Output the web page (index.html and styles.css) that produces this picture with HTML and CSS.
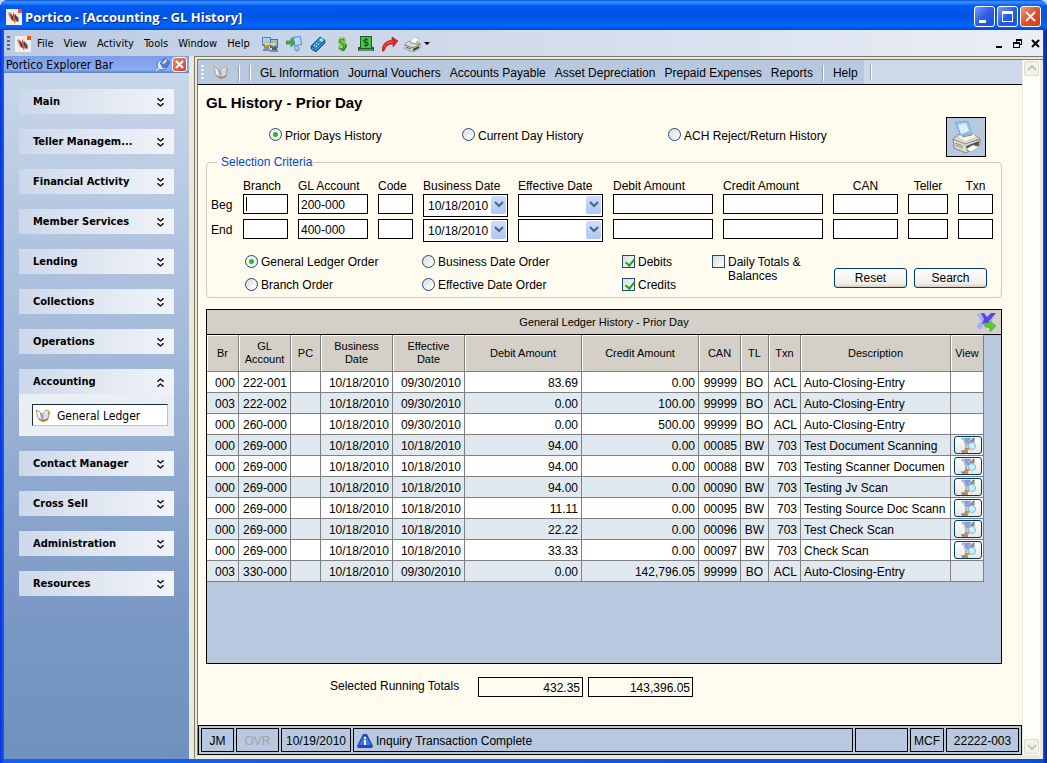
FILE: index.html
```html
<!DOCTYPE html>
<html lang="en">
<head>
  <meta charset="UTF-8">
  <meta name="viewport" content="width=device-width, initial-scale=1.0">
  <title>Portico - [Accounting - GL History]</title>
  <link rel="stylesheet" href="styles.css">
</head>
<body>
  <!-- Shared icons -->
  <svg class="defs" width="0" height="0">
    <symbol id="logo" viewBox="0 0 16 16">
      <rect width="16" height="16" fill="#f2eeea"/>
      <path d="M2 4l2-1 3 4v4l-1 1-2-3z" fill="#c98b6a"/>
      <path d="M4 5l2 1 2 4v2l-2-1z" fill="#3b3f58"/>
      <path d="M7 3l2 3 1 4-1 5-2-5z" fill="#e5502a"/>
      <path d="M9 5l3 4 1 3-2 1-2-4z" fill="#3b3f58"/>
      <path d="M11 6l2 3v4l-1-2z" fill="#a98a98"/>
      <rect x="12" width="4" height="4" fill="#f4511e"/>
    </symbol>
    <symbol id="book" viewBox="0 0 16 13">
      <path d="M1 2l3 9 4 2 5-2 2-8-1-1-4 1-2 3-3-3-3-2z" fill="#a8682c"/>
      <path d="M1 1l4 2 3 8-3-1-2-1z" fill="#fff" stroke="#d8954a"/>
      <path d="M8 11V4l3-3 3 1-1 7-2 1z" fill="#eef6fd" stroke="#d8954a"/>
      <path d="M5 3l3 3v5L6 9z" fill="#6aa6dc"/>
      <path d="M10 4v5M12 3v5" stroke="#a9cdee"/>
    </symbol>
    <symbol id="chev-down" viewBox="0 0 7 9">
      <path d="M1 0v1l2.500 2 2.500-2V0M1 5v1l2.500 2 2.500-2V5" fill="none" stroke="#000" stroke-width="1.300"/>
    </symbol>
    <symbol id="chev-up" viewBox="0 0 7 9">
      <path d="M1 4V3l2.500-2L6 3v1M1 9V8l2.500-2L6 8v1" fill="none" stroke="#000" stroke-width="1.300"/>
    </symbol>
    <symbol id="view" viewBox="0 0 18 16">
      <path d="M3 1h9l-1 2 1 2-1 2 1 2H7L6 7 5 5l1-2H3z" fill="#b9c8ec" stroke="#7c8fc0" stroke-width=".500"/>
      <path d="M6 2h5M6 4h4M7 6h4" stroke="#5f77b4"/>
      <path d="M12 5V3h2V1h1v4z" fill="#c8c8c4" stroke="#555" stroke-width=".800"/>
      <path d="M7 9v3M2 14h4v-2h4" fill="none" stroke="#7b7b78"/>
      <path d="M3 15h6" stroke="#444"/>
      <path d="M10 11l-4 4" stroke="#e8803a" stroke-width="2"/>
      <circle cx="13" cy="9" r="3.500" fill="#c4f2fb" stroke="#88b4e4"/>
      <path d="M11 8l2-1" stroke="#fff"/>
    </symbol>
  </svg>

  <div class="window">
    <header class="titlebar">
      <svg width="16" height="16"><use href="#logo"/></svg>
      <h1>Portico - [Accounting - GL History]</h1>
      <div class="win-buttons">
        <button type="button" aria-label="Minimize"><svg width="19" height="19"><path d="M4 13h7v3H4z" fill="#fff"/></svg></button>
        <button type="button" aria-label="Maximize"><svg width="19" height="19"><path d="M4 4h11v11H4zM5 7v7h9V7z" fill="#fff" fill-rule="evenodd"/></svg></button>
        <button type="button" class="close" aria-label="Close"><svg width="19" height="19"><path d="M5 5l9 9M14 5l-9 9" stroke="#fff" stroke-width="2"/></svg></button>
      </div>
    </header>

    <nav class="menubar">
      <span class="grip"></span>
      <svg class="child-logo" width="16" height="16"><use href="#logo"/></svg>
      <div class="menus">
        <button type="button">File</button>
        <button type="button">View</button>
        <button type="button">Activity</button>
        <button type="button">Tools</button>
        <button type="button">Window</button>
        <button type="button">Help</button>
      </div>
      <div class="tools">
        <button type="button" aria-label="Transfer"><svg width="16" height="16">
          <path d="M0 1h9v9H0z" fill="#4f86d8"/><path d="M1 2h7v6H1z" fill="#a6d2f8"/>
          <path d="M8 3h8v9H8z" fill="#3f6fc4"/><path d="M9 4h6v6H9z" fill="#8fc0f2"/>
          <path d="M2 10h5v3H2z" fill="#7d8db4"/><path d="M10 12h5v2h-5z" fill="#4c5a80"/>
          <path d="M1 14h7M8 15h8" stroke="#3c4660"/>
          <path d="M2 8l3-3v2h6V5l3 3-3 3V9H5v2z" fill="#fce83a" stroke="#b8901a" stroke-width=".500"/></svg></button>
        <button type="button" aria-label="Sign on"><svg width="16" height="16">
          <path d="M6 1l9-1 1 9-8 1z" fill="#5a8ed6"/><path d="M8 2l6-1 1 7-6 1z" fill="#b2dcfa"/>
          <path d="M8 10h5l1 4-3 2-3-2z" fill="#86a6d0"/><path d="M9 12h3" stroke="#dce8f6"/>
          <path d="M0 5h5V2l4 5-4 4V8H0z" fill="#3cae48" stroke="#1c7a2c" stroke-width=".500"/></svg></button>
        <button type="button" aria-label="Calculator"><svg width="16" height="16">
          <path d="M1 10l9-9 5 3v3l-9 9-5-3z" fill="#0e5f9c" stroke="#0b3e6b" stroke-width=".500"/>
          <path d="M2 10l8-8 4 2-8 9z" fill="#2f97d8"/><path d="M9 4l2-2 3 2-2 2z" fill="#b2e6fa"/>
          <path d="M6 7l1 1M8 8l1 1M4 9l1 1M6 10l1 1" stroke="#cdeefb"/>
          <path d="M2 12l4 2 8-8" fill="none" stroke="#49b0e6"/></svg></button>
        <button type="button" aria-label="Money"><svg width="16" height="16">
          <path d="M6 1h4l2 3-1 2 2 2v3l-3 4-5-1-1-3 2-2-2-3 1-4z" fill="#76c44a"/>
          <path d="M10 4L8 3 6 4v2l4 3v2l-2 2-3-1" fill="none" stroke="#2f8430"/>
          <path d="M11 8l2 2-3 5H7l4-4z" fill="#2f7a2c"/>
          <path d="M6 2h3M6 11h2" stroke="#d4f0a4"/></svg></button>
        <button type="button" aria-label="Cash"><svg width="16" height="16">
          <path d="M2 0h12v11h2v4H0v-4h2z" fill="#1d5b28"/><path d="M3 1h10v11H3z" fill="#4cc04c"/>
          <path d="M10 4L8 3 6 4v2l4 1v2l-2 1-2-1M8 2v9" fill="none" stroke="#0a4a18"/>
          <path d="M1 14h14" stroke="#a8c4a8"/></svg></button>
        <button type="button" aria-label="Forward"><svg width="16" height="16">
          <path d="M0 15C0 8 4 5 10 4V1l6 4-5 6V8c-5 0-7 2-9 7z" fill="#df2020" stroke="#8e1111" stroke-width=".500"/>
          <path d="M2 11c2-4 5-5 9-5" fill="none" stroke="#ff7068"/></svg></button>
        <button type="button" class="print-menu" aria-label="Print"><svg width="26" height="16">
          <path d="M6 6l4-5 5 2-3 5z" fill="#fff" stroke="#999" stroke-width=".500"/>
          <path d="M0 9l5-4 2 2 6 1 3-1v5l-7 4-9-4z" fill="#dcdad4" stroke="#555" stroke-width=".500"/>
          <path d="M1 9l8 3 7-4" fill="none" stroke="#77756f"/><path d="M9 13l6-3v2l-6 3z" fill="#333"/>
          <path d="M2 11l5 2" stroke="#666"/>
          <circle cx="13" cy="6" r="1" fill="#e3bb20"/>
          <path d="M20 6h6l-3 3z" fill="#000"/></svg></button>
      </div>
      <div class="child-buttons">
        <button type="button" aria-label="Minimize child"><svg width="10" height="10"><path d="M1 8h6" stroke="#000" stroke-width="2"/></svg></button>
        <button type="button" aria-label="Restore child"><svg width="10" height="10"><path d="M3 0h6v6H7V5h1V2H4v1H3zM0 3h7v6H0zm1 2v3h5V5z" fill="#000" fill-rule="evenodd"/></svg></button>
        <button type="button" aria-label="Close child"><svg width="10" height="10"><path d="M1 1l7 7M8 1L1 8" stroke="#000" stroke-width="2"/></svg></button>
      </div>
    </nav>

    <div class="workspace">
      <aside class="explorer">
        <div class="explorer-head">
          <h2>Portico Explorer Bar</h2>
          <button type="button" aria-label="Auto hide"><svg width="15" height="15">
            <circle cx="7" cy="8" r="5" fill="#dfe9fa" stroke="#4d72b8"/>
            <path d="M5 6l5-5 5 4-3 5-4 1z" fill="#4f7fd0" stroke="#2b4f9b" stroke-width=".500"/>
            <path d="M7 6l4-4 1 2-3 3z" fill="#d5e5ff"/><path d="M1 14l4-4" stroke="#eef4ff"/></svg></button>
          <button type="button" class="explorer-close" aria-label="Close explorer"><svg width="13" height="13"><path d="M3 3l7 7M10 3l-7 7" stroke="#fff" stroke-width="2"/></svg></button>
        </div>
        <ul class="groups">
          <li><button type="button">Main<svg width="7" height="9"><use href="#chev-down"/></svg></button></li>
          <li><button type="button">Teller Managem...<svg width="7" height="9"><use href="#chev-down"/></svg></button></li>
          <li><button type="button">Financial Activity<svg width="7" height="9"><use href="#chev-down"/></svg></button></li>
          <li><button type="button">Member Services<svg width="7" height="9"><use href="#chev-down"/></svg></button></li>
          <li><button type="button">Lending<svg width="7" height="9"><use href="#chev-down"/></svg></button></li>
          <li><button type="button">Collections<svg width="7" height="9"><use href="#chev-down"/></svg></button></li>
          <li><button type="button">Operations<svg width="7" height="9"><use href="#chev-down"/></svg></button></li>
          <li class="open">
            <button type="button">Accounting<svg width="7" height="9"><use href="#chev-up"/></svg></button>
            <div class="group-body">
              <a href="#"><svg width="16" height="13"><use href="#book"/></svg>General Ledger</a>
            </div>
          </li>
          <li><button type="button">Contact Manager<svg width="7" height="9"><use href="#chev-down"/></svg></button></li>
          <li><button type="button">Cross Sell<svg width="7" height="9"><use href="#chev-down"/></svg></button></li>
          <li><button type="button">Administration<svg width="7" height="9"><use href="#chev-down"/></svg></button></li>
          <li><button type="button">Resources<svg width="7" height="9"><use href="#chev-down"/></svg></button></li>
        </ul>
      </aside>

      <div class="pane">
        <div class="document">
          <nav class="gl-toolbar">
            <div class="gl-menus">
              <span class="grip light"></span>
              <svg class="gl-book" width="16" height="13"><use href="#book"/></svg>
              <span class="sep"></span>
              <span class="sep"></span>
              <button type="button">GL Information</button>
              <button type="button">Journal Vouchers</button>
              <button type="button">Accounts Payable</button>
              <button type="button">Asset Depreciation</button>
              <button type="button">Prepaid Expenses</button>
              <button type="button">Reports</button>
              <span class="sep"></span>
              <button type="button">Help</button>
            </div>
            <span class="sep"></span>
          </nav>

          <main class="history">
            <h2>GL History - Prior Day</h2>
            <div class="modes">
              <label><input type="radio" name="mode" checked>Prior Days History</label>
              <label><input type="radio" name="mode">Current Day History</label>
              <label><input type="radio" name="mode">ACH Reject/Return History</label>
              <button type="button" class="print" aria-label="Print report"><svg width="32" height="34">
                <path d="M5 2l13-1 4 13-11 2z" fill="#8fc4f6" stroke="#5b94cf" stroke-width=".500"/>
                <path d="M8 5l8-2 3 8-8 3z" fill="#dceffd"/>
                <path d="M3 19l6-5 3 2 10-2 6 3 2 2v6l-14 8-12-5z" fill="#dddbd2" stroke="#77756c" stroke-width=".800"/>
                <path d="M3 19l12 5 15-5" fill="none" stroke="#8c8a80"/>
                <path d="M7 17l4-2 2 1 10-2 4 3-12 5z" fill="#f6f5f0" stroke="#a9a79c" stroke-width=".500"/>
                <path d="M12 17l10-2" stroke="#8c8a80"/>
                <path d="M16 26l13-5v4l-12 6z" fill="#55544f"/>
                <path d="M16 29l7-4 6 2-8 5z" fill="#fff" stroke="#8a8a85" stroke-width=".500"/>
                <path d="M5 23l8 3M5 25l8 3" stroke="#8f8d85"/>
                <path d="M26 20l2-1" stroke="#58b848"/></svg></button>
            </div>

            <fieldset>
              <legend>Selection Criteria</legend>
              <div class="criteria">
                <span></span>
                <span>Branch</span>
                <span>GL Account</span>
                <span>Code</span>
                <span>Business Date</span>
                <span>Effective Date</span>
                <span>Debit Amount</span>
                <span>Credit Amount</span>
                <span class="mid">CAN</span>
                <span class="mid">Teller</span>
                <span class="mid">Txn</span>

                <span class="row-name">Beg</span>
                <span class="caret"><input type="text" aria-label="Beg Branch"></span>
                <input type="text" value="200-000" aria-label="Beg GL Account">
                <input type="text" aria-label="Beg Code">
                <span class="combo"><select aria-label="Beg Business Date"><option>10/18/2010</option></select><svg width="15" height="18"><path d="M4 6l4 4 4-4" fill="none" stroke="#4d6185" stroke-width="2"/></svg></span>
                <span class="combo"><select aria-label="Beg Effective Date"><option></option></select><svg width="15" height="18"><path d="M4 6l4 4 4-4" fill="none" stroke="#4d6185" stroke-width="2"/></svg></span>
                <input type="text" aria-label="Beg Debit Amount">
                <input type="text" aria-label="Beg Credit Amount">
                <input type="text" aria-label="Beg CAN">
                <input type="text" aria-label="Beg Teller">
                <input type="text" aria-label="Beg Txn">

                <span class="row-name">End</span>
                <input type="text" aria-label="End Branch">
                <input type="text" value="400-000" aria-label="End GL Account">
                <input type="text" aria-label="End Code">
                <span class="combo"><select aria-label="End Business Date"><option>10/18/2010</option></select><svg width="15" height="18"><path d="M4 6l4 4 4-4" fill="none" stroke="#4d6185" stroke-width="2"/></svg></span>
                <span class="combo"><select aria-label="End Effective Date"><option></option></select><svg width="15" height="18"><path d="M4 6l4 4 4-4" fill="none" stroke="#4d6185" stroke-width="2"/></svg></span>
                <input type="text" aria-label="End Debit Amount">
                <input type="text" aria-label="End Credit Amount">
                <input type="text" aria-label="End CAN">
                <input type="text" aria-label="End Teller">
                <input type="text" aria-label="End Txn">
              </div>
              <div class="options">
                <div class="option-col">
                  <label><input type="radio" name="order" checked>General Ledger Order</label>
                  <label><input type="radio" name="order">Branch Order</label>
                </div>
                <div class="option-col">
                  <label><input type="radio" name="order">Business Date Order</label>
                  <label><input type="radio" name="order">Effective Date Order</label>
                </div>
                <div class="option-col">
                  <label><input type="checkbox" checked>Debits</label>
                  <label><input type="checkbox" checked>Credits</label>
                </div>
                <div class="option-col">
                  <label><input type="checkbox">Daily Totals &amp;<br>Balances</label>
                </div>
                <div class="actions">
                  <button type="button">Reset</button>
                  <button type="button">Search</button>
                </div>
              </div>
            </fieldset>

            <section class="ledger">
              <div class="ledger-head">
                <h3>General Ledger History - Prior Day</h3>
                <button type="button" aria-label="Export"><svg width="20" height="20">
                  <path d="M1 2q3-2 6 1l2 4-1 5-3 5H2l-1-3 4-5z" fill="#a9acf8"/>
                  <path d="M13 6h4l-1 4h-4z" fill="#a9acf8"/>
                  <path d="M5 1h3l3 4 4-4h5l-6 7-2 3-6 1 2-5z" fill="#5048ea"/>
                  <path d="M8 11h5V8l7 6-6 6v-4l-5-1z" fill="#5ac832" stroke="#48a828" stroke-width=".500"/></svg></button>
              </div>
              <table>
                <colgroup>
                  <col class="c-br"><col class="c-gl"><col class="c-pc"><col class="c-date"><col class="c-date">
                  <col class="c-amt"><col class="c-amt"><col class="c-can"><col class="c-tl"><col class="c-txn">
                  <col class="c-desc"><col class="c-view">
                </colgroup>
                <thead>
                  <tr><th>Br</th><th>GL<br>Account</th><th>PC</th><th>Business<br>Date</th><th>Effective<br>Date</th><th>Debit Amount</th><th>Credit Amount</th><th>CAN</th><th>TL</th><th>Txn</th><th>Description</th><th>View</th></tr>
                </thead>
                <tbody>
                  <tr><td>000</td><td>222-001</td><td></td><td>10/18/2010</td><td>09/30/2010</td><td>83.69</td><td>0.00</td><td>99999</td><td>BO</td><td>ACL</td><td>Auto-Closing-Entry</td><td></td></tr>
                  <tr><td>003</td><td>222-002</td><td></td><td>10/18/2010</td><td>09/30/2010</td><td>0.00</td><td>100.00</td><td>99999</td><td>BO</td><td>ACL</td><td>Auto-Closing-Entry</td><td></td></tr>
                  <tr><td>000</td><td>260-000</td><td></td><td>10/18/2010</td><td>09/30/2010</td><td>0.00</td><td>500.00</td><td>99999</td><td>BO</td><td>ACL</td><td>Auto-Closing-Entry</td><td></td></tr>
                  <tr><td>000</td><td>269-000</td><td></td><td>10/18/2010</td><td>10/18/2010</td><td>94.00</td><td>0.00</td><td>00085</td><td>BW</td><td>703</td><td>Test Document Scanning</td><td><button type="button" aria-label="View"><svg width="18" height="16"><use href="#view"/></svg></button></td></tr>
                  <tr><td>000</td><td>269-000</td><td></td><td>10/18/2010</td><td>10/18/2010</td><td>94.00</td><td>0.00</td><td>00088</td><td>BW</td><td>703</td><td>Testing Scanner Documen</td><td><button type="button" aria-label="View"><svg width="18" height="16"><use href="#view"/></svg></button></td></tr>
                  <tr><td>000</td><td>269-000</td><td></td><td>10/18/2010</td><td>10/18/2010</td><td>94.00</td><td>0.00</td><td>00090</td><td>BW</td><td>703</td><td>Testing Jv Scan</td><td><button type="button" aria-label="View"><svg width="18" height="16"><use href="#view"/></svg></button></td></tr>
                  <tr><td>000</td><td>269-000</td><td></td><td>10/18/2010</td><td>10/18/2010</td><td>11.11</td><td>0.00</td><td>00095</td><td>BW</td><td>703</td><td>Testing Source Doc Scann</td><td><button type="button" aria-label="View"><svg width="18" height="16"><use href="#view"/></svg></button></td></tr>
                  <tr><td>000</td><td>269-000</td><td></td><td>10/18/2010</td><td>10/18/2010</td><td>22.22</td><td>0.00</td><td>00096</td><td>BW</td><td>703</td><td>Test Check Scan</td><td><button type="button" aria-label="View"><svg width="18" height="16"><use href="#view"/></svg></button></td></tr>
                  <tr><td>000</td><td>269-000</td><td></td><td>10/18/2010</td><td>10/18/2010</td><td>33.33</td><td>0.00</td><td>00097</td><td>BW</td><td>703</td><td>Check Scan</td><td><button type="button" aria-label="View"><svg width="18" height="16"><use href="#view"/></svg></button></td></tr>
                  <tr><td>003</td><td>330-000</td><td></td><td>10/18/2010</td><td>09/30/2010</td><td>0.00</td><td>142,796.05</td><td>99999</td><td>BO</td><td>ACL</td><td>Auto-Closing-Entry</td><td></td></tr>
                </tbody>
              </table>
            </section>

            <div class="totals">
              <label for="debit-total">Selected Running Totals</label>
              <input type="text" id="debit-total" value="432.35" readonly>
              <input type="text" value="143,396.05" aria-label="Credit total" readonly>
            </div>
          </main>

          <footer class="statusbar">
            <span class="s-user">JM</span>
            <span class="s-ovr">OVR</span>
            <span class="s-date">10/19/2010</span>
            <span class="s-message"><svg width="17" height="16">
              <path d="M6 1h4l2 4 4 8-1 2H1l-1-2 4-8z" fill="#2348b8"/>
              <path d="M7 3h2l5 9H2z" fill="#3f77e8"/>
              <path d="M8 4v2M8 7v5" stroke="#fff" stroke-width="2"/></svg>Inquiry Transaction Complete</span>
            <span class="s-blank"></span>
            <span class="s-mcf">MCF</span>
            <span class="s-id">22222-003</span>
          </footer>
        </div>

        <div class="scrollbar">
          <button type="button" aria-label="Scroll up"><svg width="13" height="13"><path d="M3 8l4-4 4 4" fill="none" stroke="#c3c8b8" stroke-width="2"/></svg></button>
          <button type="button" aria-label="Scroll down"><svg width="13" height="13"><path d="M3 5l4 4 4-4" fill="none" stroke="#c3c8b8" stroke-width="2"/></svg></button>
        </div>
      </div>
    </div>
  </div>
</body>
</html>
```

FILE: styles.css
```css
* {
  box-sizing: border-box;
}

body {
  margin: 0;
  background: #c5d4ea;
  font-family: "Liberation Sans", Arial, sans-serif;
  font-size: 12px;
  line-height: 14px;
  color: #000;
}

button {
  margin: 0;
  padding: 0;
  border: 0;
  background: none;
  font: inherit;
  color: inherit;
}

svg {
  display: block;
  flex: none;
}

.defs {
  position: absolute;
}

.window {
  display: flex;
  flex-direction: column;
  min-height: 100vh;
  padding: 0 4px 4px;
  background: linear-gradient(90deg, #0831d9, #1660f0 4px, #0450e0 calc(100% - 4px), #001ea0);
  border-radius: 8px 8px 0 0;
  overflow: hidden;
}

/* Title bar */
.titlebar {
  display: flex;
  align-items: center;
  gap: 3px;
  height: 30px;
  margin: 0 -4px;
  padding: 3px 6px 0;
  background: linear-gradient(#0a50d8, #3a94ff 2px, #0058ee 6px, #0054e3 16px, #0066ff 26px, #0048c8);
}

.titlebar h1 {
  flex: 1;
  margin: 0;
  font-family: "Open Sans", sans-serif;
  font-size: 13px;
  line-height: 16px;
  font-weight: bold;
  color: #fff;
  text-shadow: 1px 1px 0 #0a2a80;
}

.win-buttons {
  display: flex;
  gap: 2px;
}

.win-buttons button {
  width: 21px;
  height: 21px;
  border: 1px solid #fff;
  border-radius: 3px;
  background: linear-gradient(135deg, #7a9cf4, #2a5ce4 50%, #1c50e0);
}

.win-buttons .close {
  background: linear-gradient(135deg, #f09c80, #e2502a 50%, #d03c14);
}

/* Menu bar */
.menubar {
  display: flex;
  align-items: center;
  height: 26px;
  padding: 2px 0 0 3px;
  background: linear-gradient(90deg, #bccbe2, #dbe2f0 70%, #ebeff5);
  font-family: "DejaVu Sans Condensed", sans-serif;
  font-size: 11px;
}

.grip {
  width: 3px;
  height: 16px;
  background: repeating-linear-gradient(#4a6aa5 0 2px, transparent 2px 4px);
}

.grip.light {
  background: repeating-linear-gradient(#e8eef8 0 2px, transparent 2px 4px);
}

.child-logo {
  margin: 0 6px 0 5px;
}

.menus {
  display: flex;
  gap: 10px;
}

.tools {
  display: flex;
  gap: 8px;
  margin-left: 12px;
}

.tools .print-menu {
  margin-left: -2px;
}

.child-buttons {
  display: flex;
  gap: 8px;
  margin-left: auto;
  padding-right: 2px;
}

.workspace {
  display: flex;
  flex: 1;
}

/* Explorer bar */
.explorer {
  width: 185px;
  flex: none;
  background: linear-gradient(#cbd8ea, #a0b7d8 45%, #7a98c4 80%, #7090be);
  font-family: "DejaVu Sans Condensed", sans-serif;
  font-size: 11px;
}

.explorer-head {
  display: flex;
  align-items: center;
  gap: 2px;
  height: 17px;
  padding: 0 2px;
  background: linear-gradient(#7a9ee8, #8aacf0 80%, #5c7cc0);
}

.explorer-head h2 {
  flex: 1;
  margin: 0;
  font-size: 12px;
  font-weight: normal;
}

.explorer-close {
  border: 1px solid #fff;
  border-radius: 3px;
  background: linear-gradient(135deg, #ee8a68, #d8401c);
}

.groups {
  display: flex;
  flex-direction: column;
  gap: 15px;
  margin: 0;
  padding: 16px 15px;
  list-style: none;
}

.groups button {
  display: flex;
  align-items: center;
  justify-content: space-between;
  width: 100%;
  height: 25px;
  padding: 1px 10px 0 14px;
  background: linear-gradient(90deg, #ccd8ea, #dce3f0 35%, #f0f4f9);
  font-weight: bold;
}

.group-body {
  padding: 10px 6px 10px 13px;
  background: #e9eff4;
}

.group-body a {
  display: flex;
  align-items: center;
  gap: 6px;
  height: 22px;
  padding: 1px 0 0 2px;
  border: 1px solid #b0c4de;
  border-top-color: #1c2c3c;
  border-left-color: #1c2c3c;
  background: #fff;
  color: #000;
  font-size: 12px;
  text-decoration: none;
}

/* Document pane */
.pane {
  display: flex;
  flex: 1;
  margin-left: 5px;
  padding-right: 3px;
  border: 4px double #7c7a6c;
  border-right: 0;
  border-bottom-color: #ece9d8;
  background: #ece9d8;
  box-shadow: -5px 0 0 #ece9d8;
}

.document {
  display: flex;
  flex-direction: column;
  flex: 1;
  background: #fffbee;
}

.gl-toolbar {
  display: flex;
  align-items: center;
  height: 25px;
  border-bottom: 1px solid #000;
  background: #cdd9ea;
}

.gl-menus {
  display: flex;
  align-items: center;
  gap: 9px;
  height: 24px;
  margin-right: 6px;
  padding: 1px 6px 0 3px;
  background: #b8c8de;
}

.gl-book {
  opacity: .7;
}

.sep {
  width: 2px;
  height: 16px;
  border-left: 1px solid #98a8c0;
  border-right: 1px solid #fff;
}

.history {
  display: flex;
  flex-direction: column;
  flex: 1;
  padding: 9px 20px 28px 8px;
}

.history h2 {
  margin: 0;
  font-size: 15px;
  line-height: 18px;
}

.modes {
  display: grid;
  grid-template-columns: 193px 206px 1fr 40px;
  height: 43px;
  padding: 5px 16px 0 63px;
}

label {
  display: flex;
  align-items: flex-start;
  gap: 3px;
}

.modes label {
  margin-top: 11px;
  line-height: 16px;
}

input[type="radio"],
input[type="checkbox"] {
  appearance: none;
  flex: none;
  width: 13px;
  height: 13px;
  margin: 0;
  border: 1px solid #1d4a80;
  background: linear-gradient(135deg, #dcdcd6, #fff);
}

input[type="radio"] {
  border-radius: 50%;
}

input[type="radio"]:checked {
  background: radial-gradient(circle, #3db02d 2px, #f4f4f0 3px);
}

input[type="checkbox"]:checked::after {
  content: "";
  display: block;
  width: 4px;
  height: 7px;
  margin: 1px 0 0 4px;
  border: solid #21a121;
  border-width: 0 2px 2px 0;
  transform: rotate(40deg);
}

.print {
  display: flex;
  align-items: center;
  justify-content: center;
  width: 40px;
  height: 40px;
  border: 1px solid #000;
  background: #b8c8de;
}

/* Selection criteria */
fieldset {
  min-width: 0;
  margin: 0;
  padding: 11px 8px 5px 4px;
  border: 1px solid #ccccb8;
  border-radius: 4px;
}

legend {
  margin-left: 6px;
  padding: 0 0 0 4px;
  color: #0046d5;
}

.criteria {
  display: grid;
  grid-template-columns: 22px 45px 70px 35px 85px 85px 1fr 1fr 65px 40px 35px;
  column-gap: 10px;
  row-gap: 2px;
}

.criteria > span {
  line-height: 12px;
}

.criteria .mid {
  text-align: center;
}

.criteria .row-name {
  line-height: 22px;
}

input[type="text"] {
  width: 100%;
  height: 20px;
  margin: 0;
  padding: 1px 2px 0;
  border: 1px solid #000;
  border-radius: 0;
  background: #fff;
  font: inherit;
}

/* text cursor in the focused field */
.caret {
  position: relative;
}

.caret::after {
  content: "";
  position: absolute;
  top: 3px;
  left: 3px;
  width: 1px;
  height: 14px;
  background: #000;
}

.combo {
  position: relative;
}

.combo select {
  appearance: none;
  display: block;
  width: 100%;
  height: 23px;
  padding: 1px 0 0 4px;
  border: 1px solid #000;
  border-radius: 0;
  background: #fff;
  font: inherit;
  color: #000;
}

.combo svg {
  position: absolute;
  top: 2px;
  right: 2px;
  border-radius: 2px;
  background: linear-gradient(#cfdcfc, #b0c6f6);
  pointer-events: none;
}

.options {
  display: flex;
  padding: 12px 6px 0 34px;
}

.options label {
  padding-top: 1px;
}

.option-col {
  display: flex;
  flex-direction: column;
  gap: 8px;
  width: 90px;
}

.option-col:first-child {
  width: 177px;
}

.option-col:nth-child(2) {
  width: 200px;
}

.option-col:nth-child(4) {
  width: 110px;
}

.actions {
  display: flex;
  gap: 7px;
  margin: 14px 0 0 auto;
}

.actions button {
  width: 73px;
  height: 20px;
  border: 1px solid #003c74;
  border-radius: 3px;
  background: linear-gradient(#fff, #f0efe8 80%, #d6d0c4);
}

/* Ledger grid */
.ledger {
  flex: 1;
  margin-top: 11px;
  border: 1px solid #000;
  background: #b8c8de;
}

.ledger-head {
  display: flex;
  align-items: center;
  height: 25px;
  padding: 0 5px 0 25px;
  border-bottom: 1px solid #000;
  background: #d4d0c8;
}

.ledger-head h3 {
  flex: 1;
  margin: 0;
  font-size: 11px;
  font-weight: normal;
  text-align: center;
}

table {
  width: 777px;
  table-layout: fixed;
  border-collapse: separate;
  border-spacing: 0;
}

.c-br { width: 32px; }
.c-gl { width: 52px; }
.c-pc { width: 30px; }
.c-date { width: 72px; }
.c-amt { width: 117px; }
.c-can { width: 42px; }
.c-tl { width: 28px; }
.c-txn { width: 32px; }
.c-desc { width: 150px; }
.c-view { width: 33px; }

th {
  height: 37px;
  padding: 0;
  border: solid #808080;
  border-width: 0 1px 1px 0;
  background: #d4d0c8;
  box-shadow: inset 1px 1px 0 #fff;
  font-size: 11px;
  line-height: 13px;
  font-weight: normal;
}

td {
  height: 21px;
  padding: 1px 3px 0;
  border: solid #808080;
  border-width: 0 1px 1px 0;
  background: #fff;
  text-align: right;
  white-space: nowrap;
  overflow: hidden;
}

tbody tr:nth-child(even) td {
  background: #e0e8f0;
}

td:nth-child(2) {
  padding: 1px 0 0 4px;
  text-align: left;
}

td:nth-child(9) {
  padding: 1px 0 0;
  text-align: center;
}

td:nth-child(11) {
  padding-right: 0;
  text-align: left;
}

td:last-child {
  padding: 0 1px 0 3px;
}

td button {
  display: flex;
  align-items: center;
  justify-content: center;
  width: 28px;
  height: 18px;
  border: 1px solid #003c74;
  border-radius: 3px;
  background: linear-gradient(#fff, #e8e6dc);
}

.totals {
  display: flex;
  gap: 5px;
  margin: 13px 0 0 124px;
}

.totals label {
  width: 143px;
  padding-top: 2px;
}

.totals input[type="text"] {
  width: 105px;
  background: #fffbee;
  text-align: right;
}

/* Status bar */
.statusbar {
  display: flex;
  gap: 2px;
  height: 30px;
  padding: 2px;
  border: 1px solid #000;
  background: #b8c8de;
}

.statusbar span {
  display: flex;
  align-items: center;
  justify-content: center;
  height: 24px;
  padding-top: 1px;
  border: 1px solid #000;
}

.statusbar .s-user { width: 33px; }
.statusbar .s-ovr { width: 43px; color: #a0a4a8; }
.statusbar .s-date { width: 70px; }
.statusbar .s-blank { width: 53px; }
.statusbar .s-mcf { width: 34px; }
.statusbar .s-id { width: 73px; }

.statusbar .s-message {
  flex: 1;
  justify-content: flex-start;
  gap: 2px;
  padding-left: 3px;
}

.scrollbar {
  display: flex;
  flex-direction: column;
  justify-content: space-between;
  width: 18px;
  padding: 1px;
  border-left: 1px solid #ecebe0;
  background: #fefefa;
}

.scrollbar button {
  width: 15px;
  height: 15px;
  border: 1px solid #d8dccb;
  border-radius: 2px;
  background: #f2f2ea;
}
```
